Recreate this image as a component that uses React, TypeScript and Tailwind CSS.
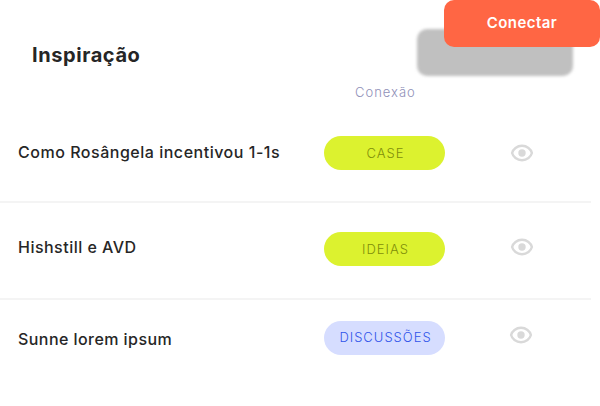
import React from 'react';

interface Item {
  title: string;
  tag: string;
  rowClass: string;
  titleClass: string;
  tagClass: string;
  eyeClass: string;
}

const items: Item[] = [
  {
    title: 'Como Rosângela incentivou 1-1s',
    tag: 'CASE',
    rowClass: 'h-[99px] pt-8 border-b-2',
    titleClass: 'pt-[4px] tracking-[0.52px]',
    tagClass: 'pt-px bg-[#dcf22f] text-[#7f8e0a]',
    eyeClass: 'mt-[5px] ml-[65px]',
  },
  {
    title: 'Hishstill e AVD',
    tag: 'IDEIAS',
    rowClass: 'h-[97px] pt-[29px] border-b-2',
    titleClass: 'pt-[3px] tracking-[0.48px]',
    tagClass: 'pt-px bg-[#dcf22f] text-[#7f8e0a]',
    eyeClass: 'mt-[3px] ml-[65px]',
  },
  {
    title: 'Sunne lorem ipsum',
    tag: 'DISCUSSÕES',
    rowClass: 'h-[106px] pt-[21px]',
    titleClass: 'pt-[6px] tracking-[0.44px]',
    tagClass: 'bg-[#d6ddff] text-[#3054ea]',
    eyeClass: 'mt-[2px] ml-[64px]',
  },
];

function EyeIcon({ className }: { className: string }) {
  return (
    <svg className={`w-6 h-6 shrink-0 ${className}`} viewBox="0 0 24 24" fill="none">
      <path
        d="M2.1 12C3 8.3 7 4.8 12 4.8s9 3.5 9.9 7.2c-.9 3.7-4.9 7.2-9.9 7.2S3 15.7 2.1 12Z"
        stroke="#d9d9d9"
        strokeWidth="2.4"
        strokeLinejoin="round"
      />
      <circle cx="12" cy="12" r="3.7" fill="#d9d9d9" />
    </svg>
  );
}

function Row({ item }: { item: Item }) {
  return (
    <div className={`flex items-start w-[591px] border-[#f4f4f4] ${item.rowClass}`}>
      <div className={`w-[324px] pl-[18px] text-base font-medium whitespace-nowrap text-[#262626] ${item.titleClass}`}>
        {item.title}
      </div>
      <span className={`flex items-center justify-center w-[121px] h-[34px] pl-[2px] rounded-full text-[13px] font-light tracking-[1px] ${item.tagClass}`}>
        {item.tag}
      </span>
      <EyeIcon className={item.eyeClass} />
    </div>
  );
}

export default function App() {
  return (
    <div className="w-[600px] h-[406px] overflow-hidden bg-white font-['Inter',sans-serif]">
      <header className="flex items-start justify-between h-20">
        <h1 className="pt-10 pl-8 text-xl leading-[30px] font-bold tracking-[0.58px] text-[#262626]">Inspiração</h1>
        <div className="relative">
          {/* Blurred block behind the button */}
          <div className="absolute top-[29px] -left-[27px] w-[156px] h-[47px] rounded-[10px] bg-[#c0c0c0] blur-[1.5px]" />
          <button className="relative block w-[156px] h-[47px] rounded-[10px] bg-[#ff6644] text-[15px] font-semibold tracking-[0.45px] text-white">
            Conectar
          </button>
        </div>
      </header>
      <div className="h-6 pl-[355px] text-[13px] leading-[25px] font-light tracking-[1px] text-[#9090b8]">Conexão</div>
      <main>
        {items.map((item) => (
          <Row key={item.title} item={item} />
        ))}
      </main>
    </div>
  );
}
